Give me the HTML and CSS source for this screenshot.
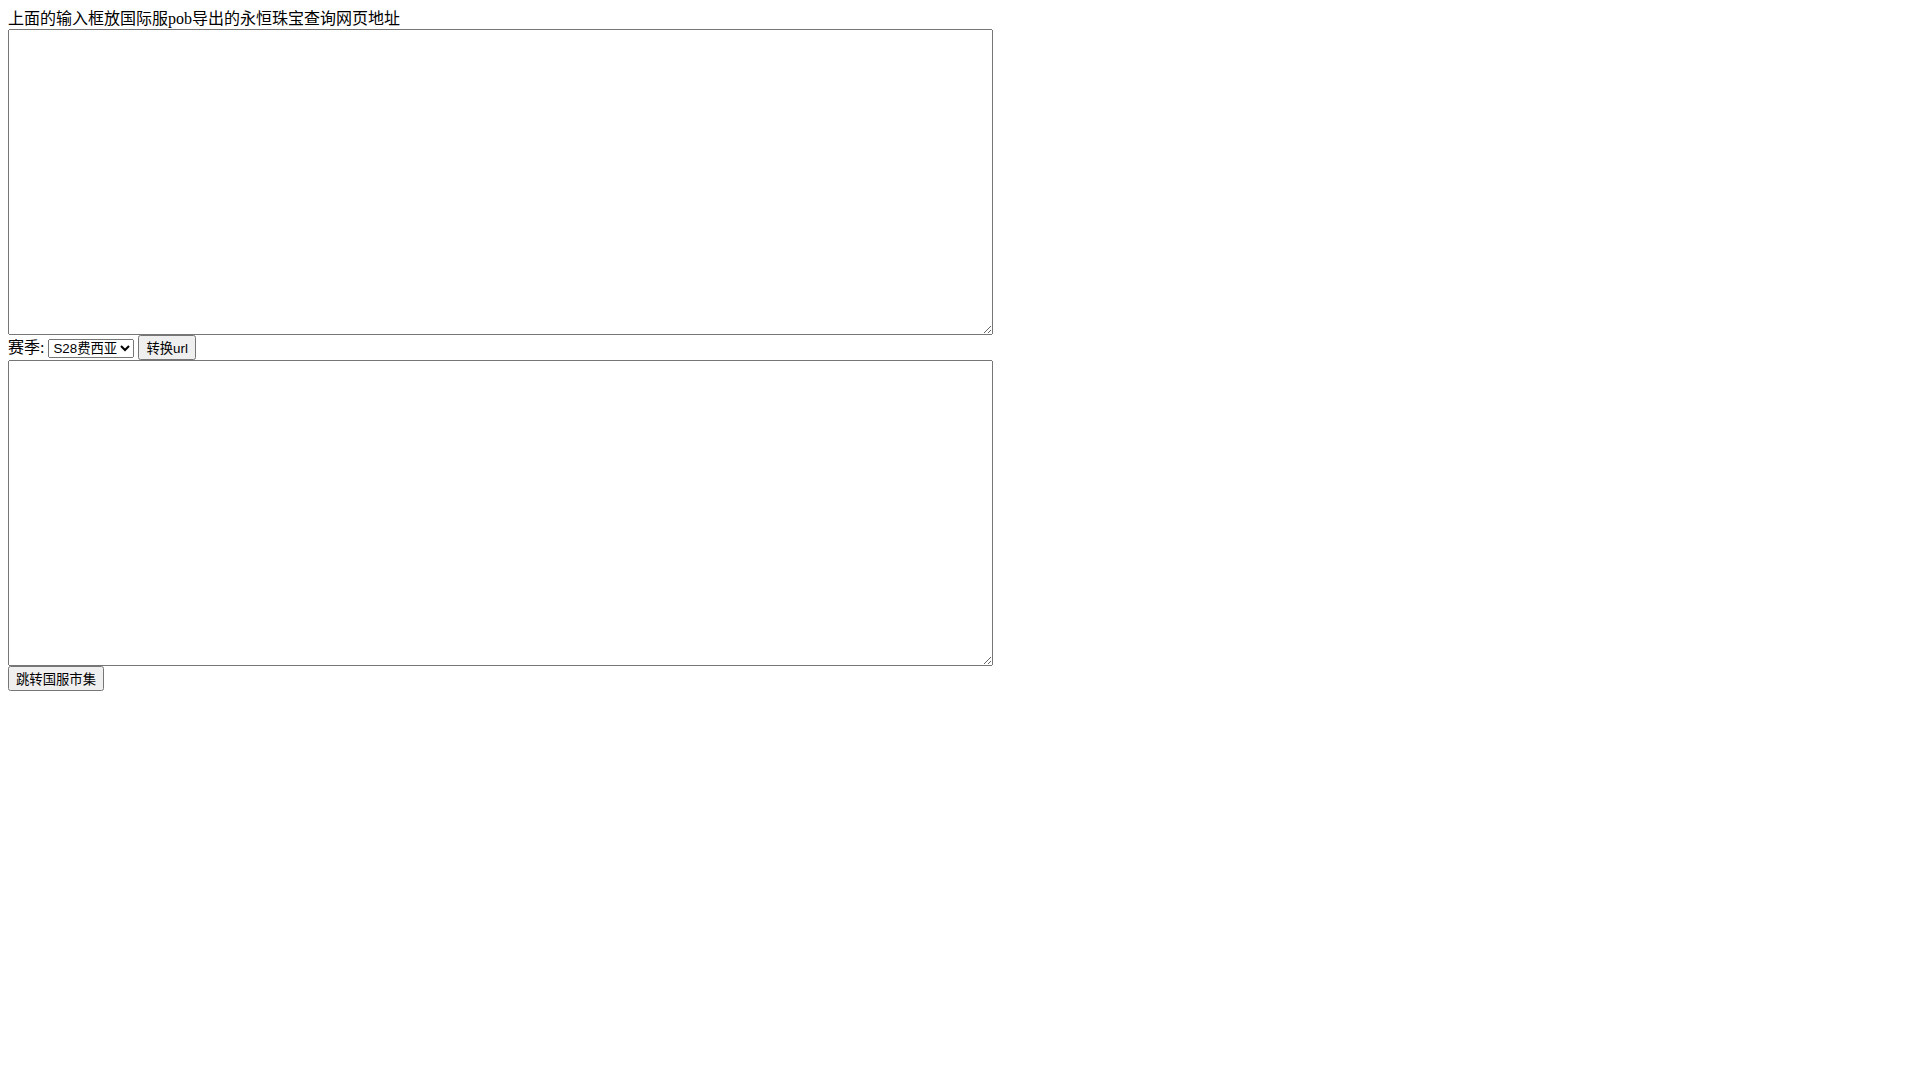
FILE: index.html
```html
<!DOCTYPE html>
<html lang="zh-CN">
<head>
<meta charset="utf-8">
<title>永恒珠宝查询</title>
<link rel="stylesheet" href="styles.css">
</head>
<body class="page">
<div class="title">上面的输入框放国际服pob导出的永恒珠宝查询网页地址</div>
<textarea class="box"></textarea>
<div class="row">
  <span class="label">赛季:</span>
  <select class="ctl">
    <option>S28费西亚</option>
  </select>
  <button class="ctl">转换url</button>
</div>
<textarea class="box"></textarea>
<button class="ctl">跳转国服市集</button>
</body>
</html>
```

FILE: styles.css
```css
.page {
  margin: 8px;
  font-family: "Liberation Serif", "Noto Sans CJK SC", serif;
  font-size: 16px;
  color: #000;
  background: #fff;
}
.title {
  line-height: 21px;
}
.row {
  line-height: 22px;
}
.box {
  display: block;
  box-sizing: border-box;
  width: 985px;
  height: 306px;
  margin: 0;
}
.ctl {
  font-family: "Liberation Sans", "Noto Sans CJK SC", sans-serif;
  font-size: 13.333px;
}
```
